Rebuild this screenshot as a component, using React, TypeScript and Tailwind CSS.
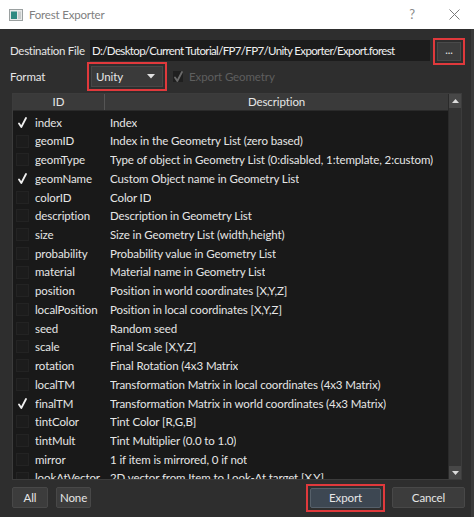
import React from 'react'

type Field = { id: string; desc: string; checked?: boolean }

const fields: Field[] = [
  { id: 'index', desc: 'Index', checked: true },
  { id: 'geomID', desc: 'Index in the Geometry List (zero based)' },
  { id: 'geomType', desc: 'Type of object in Geometry List (0:disabled, 1:template, 2:custom)' },
  { id: 'geomName', desc: 'Custom Object name in Geometry List', checked: true },
  { id: 'colorID', desc: 'Color ID' },
  { id: 'description', desc: 'Description in Geometry List' },
  { id: 'size', desc: 'Size in Geometry List (width,height)' },
  { id: 'probability', desc: 'Probability value in Geometry List' },
  { id: 'material', desc: 'Material name in Geometry List' },
  { id: 'position', desc: 'Position in world coordinates [X,Y,Z]' },
  { id: 'localPosition', desc: 'Position in local coordinates [X,Y,Z]' },
  { id: 'seed', desc: 'Random seed' },
  { id: 'scale', desc: 'Final Scale [X,Y,Z]' },
  { id: 'rotation', desc: 'Final Rotation (4x3 Matrix' },
  { id: 'localTM', desc: 'Transformation Matrix in local coordinates (4x3 Matrix)' },
  { id: 'finalTM', desc: 'Transformation Matrix in world coordinates (4x3 Matrix)', checked: true },
  { id: 'tintColor', desc: 'Tint Color [R,G,B]' },
  { id: 'tintMult', desc: 'Tint Multiplier (0.0 to 1.0)' },
  { id: 'mirror', desc: '1 if item is mirrored, 0 if not' },
  { id: 'lookAtVector', desc: '2D vector from Item to Look-At target [X,Y]' },
]

function Check({ color = '#f0f0f0' }: { color?: string }) {
  return (
    <svg width="9" height="11" viewBox="0 0 9 11">
      <path d="M1 6.5 L3.3 10 L8 1" fill="none" stroke={color} strokeWidth="1.8" strokeLinecap="round" strokeLinejoin="round" />
    </svg>
  )
}

function RedBox() {
  return <span className="pointer-events-none absolute -inset-[4px] border-[2.5px] border-[#e0393c]" />
}

export default function App() {
  return (
    <div className="w-[474px] h-[517px] overflow-hidden bg-[#2e2e2e] text-[11.5px] tracking-[-0.1px] text-[#e6e6e6] whitespace-nowrap" style={{ fontFamily: 'Lato, "Noto Sans", sans-serif' }}>
      {/* title bar */}
      <div className="h-[29px] bg-white flex items-center pl-[9px] pr-[14px]">
        <svg width="14" height="12" viewBox="0 0 14 12" className="mr-[6px]">
          <rect x="0.5" y="0.5" width="13" height="11" fill="#e8eaea" stroke="#9aa0a0" />
          <rect x="2" y="2.5" width="6" height="7.5" fill="#2f8a82" />
          <rect x="9" y="2.5" width="3" height="7.5" fill="#c8cccc" />
        </svg>
        <span className="text-[#808080] text-[11.5px] tracking-[-0.2px]">Forest Exporter</span>
        <span className="ml-auto text-[#8a8a8a] text-[13px] mr-[34px]">?</span>
        <svg width="11" height="11" viewBox="0 0 11 11">
          <path d="M0.5 0.5 L10.5 10.5 M10.5 0.5 L0.5 10.5" stroke="#7a7a7a" strokeWidth="1" />
        </svg>
      </div>

      <div className="flex h-[488px] border-r-[3px] border-[#3a3a3a]">
        <div className="flex-1 flex flex-col pl-[10px] pr-[6px]">
          {/* destination */}
          <div className="flex items-center h-[21px] mt-[11px]">
            <span className="w-[80px] shrink-0 tracking-[-0.3px]">Destination File</span>
            <div className="w-[340px] shrink-0 h-[21px] bg-[#1c1c1c] flex items-center pl-[2px] text-[#f0f0f0] tracking-[-0.65px] overflow-hidden">
              D:/Desktop/Current Tutorial/FP7/FP7/Unity Exporter/Export.forest
            </div>
            <div className="relative ml-[7px] mt-[1px]">
              <div className="w-[24px] h-[19px] bg-[#3c3c3c] border border-[#4a4a4a] flex items-center justify-center text-[11px] leading-none pb-[3px]">...</div>
              <RedBox />
            </div>
          </div>

          {/* format */}
          <div className="flex items-center h-[21px] mt-[5px]">
            <span className="w-[81px] shrink-0">Format</span>
            <div className="relative">
              <div className="w-[72px] h-[21px] bg-[#3a3a3a] border border-[#474747] flex items-center pl-[4px] pr-[7px]">
                <span>Unity</span>
                <svg width="8" height="5" viewBox="0 0 8 5" className="ml-auto">
                  <path d="M0 0 L8 0 L4 4.5 Z" fill="#e0e0e0" />
                </svg>
              </div>
              <RedBox />
            </div>
            <div className="ml-[10px] w-[10px] h-[11px] bg-[#1f1f1f] flex items-center justify-center">
              <Check color="#6a6a6a" />
            </div>
            <span className="ml-[6px] text-[#5e5e5e]">Export Geometry</span>
          </div>

          {/* table */}
          <div className="mt-[6px] ml-[2px] w-[450px] h-[387px] flex border border-[#3c3c3c]">
            <div className="flex-1 bg-[#191919] flex flex-col overflow-hidden">
              <div className="h-[17px] shrink-0 flex bg-[#3a3a3a] border-b border-[#2a2a2a]">
                <div className="w-[92px] flex items-center justify-center border-r border-[#555]">ID</div>
                <div className="flex-1 flex items-center justify-center">Description</div>
              </div>
              <div className="pt-[2px]">
                {fields.map((f) => (
                  <div key={f.id} className="h-[18.72px] flex items-center">
                    <div className="w-[13px] h-[13px] shrink-0 ml-[3px] mr-[6px] flex items-center justify-center bg-[#1c1c1c] border border-[#232323]" style={f.checked ? { background: 'transparent', borderColor: 'transparent' } : undefined}>
                      {f.checked && <Check />}
                    </div>
                    <span className="w-[75px] shrink-0 overflow-hidden">{f.id}</span>
                    <span className="overflow-hidden">{f.desc}</span>
                  </div>
                ))}
              </div>
            </div>
            {/* scrollbar */}
            <div className="w-[13px] shrink-0 bg-[#333333] flex flex-col justify-between border-l border-[#2a2a2a]">
              <div className="h-[14px] bg-[#474747] flex items-center justify-center">
                <svg width="7" height="4" viewBox="0 0 7 4"><path d="M0 4 L7 4 L3.5 0 Z" fill="#dcdcdc" /></svg>
              </div>
              <div className="h-[13px] bg-[#474747] flex items-center justify-center">
                <svg width="7" height="4" viewBox="0 0 7 4"><path d="M0 0 L7 0 L3.5 4 Z" fill="#dcdcdc" /></svg>
              </div>
            </div>
          </div>

          {/* buttons */}
          <div className="flex items-center mt-[7px] pl-[2px]">
            <button className="w-[36px] h-[21px] bg-[#3c3c3c] border border-[#484848] rounded-[2px]">All</button>
            <button className="ml-[8px] w-[35px] h-[21px] bg-[#3c3c3c] border border-[#484848] rounded-[2px]">None</button>
            <div className="relative ml-auto">
              <button className="w-[71px] h-[20px] bg-[#3d4752] border border-[#56606a] rounded-[2px]">Export</button>
              <RedBox />
            </div>
            <button className="ml-[11px] w-[73px] h-[21px] bg-[#3c3c3c] border border-[#484848] rounded-[2px]">Cancel</button>
          </div>
        </div>
      </div>
    </div>
  )
}
